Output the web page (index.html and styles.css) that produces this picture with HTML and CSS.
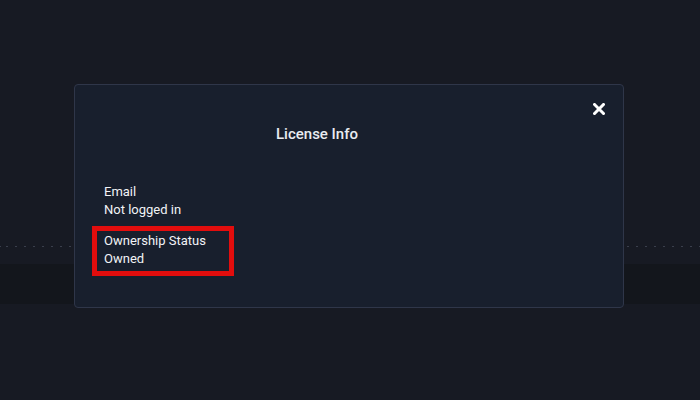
FILE: index.html
```html
<!DOCTYPE html>
<html>
<head>
<meta charset="utf-8">
<link rel="stylesheet" href="styles.css">
</head>
<body>
<div class="backdrop">
  <div class="spacer-top"></div>
  <div class="dots"></div>
  <div class="spacer-mid"></div>
  <div class="band"></div>
</div>
<div class="modal">
  <button class="close" aria-label="Close">
    <svg width="12" height="12" viewBox="0 0 12 12"><path d="M1.5 1.5 L10.5 10.5 M10.5 1.5 L1.5 10.5" stroke="#ffffff" stroke-width="3" stroke-linecap="square" fill="none"/></svg>
  </button>
  <div class="title">License Info</div>
  <div class="fields">
    <div class="field">
      <div>Email</div>
      <div>Not logged in</div>
    </div>
    <div class="field highlight">
      <div>Ownership Status</div>
      <div>Owned</div>
    </div>
  </div>
</div>
</body>
</html>
```
FILE: styles.css
```css
html, body {
  margin: 0;
  padding: 0;
  width: 700px;
  height: 400px;
  overflow: hidden;
  background: #171a23;
  font-family: Roboto, "Liberation Sans", sans-serif;
  color: #f1f3f6;
}
.backdrop {
  display: flex;
  flex-direction: column;
}
.spacer-top { height: 246px; }
.dots {
  height: 1px;
  background: repeating-linear-gradient(90deg, #3a3f4c 0 2px, transparent 2px 9px);
  background-position: 6px 0;
}
.spacer-mid { height: 17px; }
.band {
  height: 40px;
  background: #13161c;
}
.modal {
  position: absolute;
  left: 74px;
  top: 84px;
  width: 548px;
  box-sizing: content-box;
  background: #181f2d;
  border: 1px solid #2f3649;
  border-radius: 4px;
  padding: 39px 0 39px 0;
}
.close {
  position: absolute;
  top: 18px;
  right: 18px;
  width: 12px;
  height: 12px;
  padding: 0;
  border: 0;
  background: none;
  display: flex;
}
.title {
  font-size: 15px;
  font-weight: 500;
  line-height: 20px;
  padding-left: 201px;
  color: #e9ecf1;
}
.fields {
  margin-top: 39px;
  padding-left: 29px;
  display: flex;
  flex-direction: column;
  gap: 13px;
  font-size: 13px;
  line-height: 18px;
}
.field {
  position: relative;
}
.highlight::after {
  content: "";
  position: absolute;
  left: -12px;
  top: -6px;
  width: 132px;
  height: 40px;
  border: 5px solid #e20d0d;
}
```
